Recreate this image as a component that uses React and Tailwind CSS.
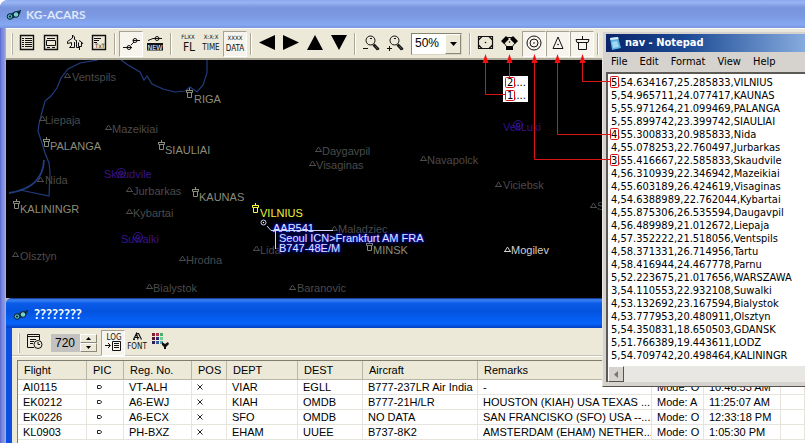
import React from "react";

const SANS = "font-['Liberation_Sans',Arial,sans-serif]";
const TAHOMA = "font-['DejaVu_Sans_Condensed','DejaVu_Sans',sans-serif]";

const TRIANGLE = "triangle";
const TOWER = "tower";
const VOR = "vor";

const DIM = "#4b4b4b";
const CITY = "#8c8c7a";
const PURPLE = "#37128a";

// x and y are the start of the name and its baseline; sx and sy the symbol's centre.
const places = [
  { name: "Ventspils", x: 72, y: 21, sx: 67, sy: 15, kind: TRIANGLE, color: DIM },
  { name: "RIGA", x: 194, y: 43, sx: 189, sy: 33, kind: TOWER, color: CITY },
  { name: "Liepaja", x: 45, y: 64, sx: 42, sy: 58, kind: TRIANGLE, color: DIM },
  { name: "Mazeikiai", x: 112, y: 73, sx: 108, sy: 67, kind: TRIANGLE, color: DIM },
  { name: "PALANGA", x: 50, y: 90, sx: 46, sy: 82, kind: TOWER, color: CITY },
  { name: "SIAULIAI", x: 165, y: 94, sx: 161, sy: 85, kind: TOWER, color: CITY },
  { name: "Skaudvile", x: 104, y: 118, sx: 121, sy: 113, kind: VOR, color: PURPLE },
  { name: "Nida", x: 45, y: 124, sx: 40, sy: 119, kind: TRIANGLE, color: DIM },
  { name: "Jurbarkas", x: 133, y: 135, sx: 129, sy: 129, kind: TRIANGLE, color: DIM },
  { name: "KAUNAS", x: 199, y: 141, sx: 195, sy: 132, kind: TOWER, color: CITY },
  { name: "Kybartai", x: 133, y: 157, sx: 129, sy: 151, kind: TRIANGLE, color: DIM },
  { name: "KALININGR", x: 20, y: 153, sx: 16, sy: 144, kind: TOWER, color: CITY },
  { name: "Suwalki", x: 121, y: 183, sx: 138, sy: 177, kind: VOR, color: PURPLE },
  { name: "Olsztyn", x: 20, y: 200, sx: 15, sy: 194, kind: TRIANGLE, color: DIM },
  { name: "Hrodna", x: 186, y: 204, sx: 182, sy: 198, kind: TRIANGLE, color: DIM },
  { name: "Bialystok", x: 153, y: 232, sx: 149, sy: 226, kind: TRIANGLE, color: DIM },
  { name: "Daygavpil", x: 322, y: 95, sx: 318, sy: 89, kind: TRIANGLE, color: DIM },
  { name: "Visaginas", x: 316, y: 109, sx: 312, sy: 103, kind: TRIANGLE, color: DIM },
  { name: "Navapolck", x: 427, y: 104, sx: 423, sy: 98, kind: TRIANGLE, color: DIM },
  { name: "Viciebsk", x: 503, y: 129, sx: 498, sy: 124, kind: TRIANGLE, color: DIM },
  { name: "S", x: 597, y: 150, sx: 593, sy: 145, kind: TRIANGLE, color: DIM },
  { name: "VeliLuki", x: 503, y: 71, sx: 518, sy: 65, kind: VOR, color: PURPLE },
  { name: "VILNIUS", x: 260, y: 157, sx: 255, sy: 148, kind: TOWER, color: "#f4f43c" },
  { name: "Maladziec", x: 338, y: 173, sx: 334, sy: 168, kind: TRIANGLE, color: DIM },
  { name: "Lida", x: 260, y: 194, sx: 256, sy: 188, kind: TRIANGLE, color: DIM },
  { name: "MINSK", x: 373, y: 194, sx: 369, sy: 186, kind: TOWER, color: CITY },
  { name: "Mogilev", x: 511, y: 194, sx: 507, sy: 189, kind: TRIANGLE, color: "#cfcfcf" },
  { name: "Baranovic", x: 297, y: 232, sx: 292, sy: 227, kind: TRIANGLE, color: DIM },
];

function Symbol({ kind, x, y, color }) {
  if (kind === TRIANGLE)
    return <path d={`M${x - 3} ${y + 2.5}H${x + 4}M${x - 2} ${y + 2}L${x + 0.5} ${y - 2}L${x + 3} ${y + 2}`} fill="none" stroke={color} />;
  if (kind === TOWER)
    return (
      <path
        d={`M${x - 3} ${y - 2.5}H${x + 4}M${x - 2.5} ${y - 2}V${y - 0.5}H${x + 3.5}V${y - 2}M${x - 1.5} ${y}V${y + 4.5}H${x + 2.5}V${y}M${x + 0.5} ${y - 5}V${y - 2}`}
        fill="none"
        stroke={color}
      />
    );
  return (
    <g fill="none" stroke={color}>
      <circle cx={x} cy={y} r="4.5" />
      <circle cx={x} cy={y} r="2" />
    </g>
  );
}

function RadarMap() {
  return (
    <section aria-label="Map" className="relative h-[238px] shrink-0 overflow-hidden bg-black">
      <svg className="absolute -left-[6px] top-0" width="605" height="238" aria-hidden="true">
        <g fill="none" stroke="#223c80" strokeWidth="1.2">
          <path d="M98 0L80 3L68 9L61 18L57 28L51 36L45 41L42 52L39 64L38 71L42 83L45 93L49 103L50 112L49 136L20 130" />
          <path d="M121 0L128 5L140 12L144 20L147 16L152 24L163 29L175 32L185 31L190 27L197 32L203 25L207 13V0" />
          <path d="M44 100Q43 128 9 133" strokeWidth="1.8" />
        </g>
        {places.map((p) => (
          <Symbol key={p.name} kind={p.kind} x={p.sx} y={p.sy} color={p.color} />
        ))}
      </svg>
      <div className="absolute -left-[6px] top-0">
        {places.map((p) => (
          <span
            key={p.name}
            className={`absolute text-[11px] leading-3 ${SANS}`}
            style={{ left: p.x, top: p.y - 10, color: p.color }}
          >
            {p.name}
          </span>
        ))}
      </div>
      <div
        className={`absolute top-[163px] left-[267px] text-[11px] leading-[10px] whitespace-nowrap text-[#dfe4ff] [text-shadow:0_0_2px_#1c1ce8,0_0_3px_#1c1ce8,0_0_5px_#1010c0] ${SANS}`}
      >
        <div>AAR541</div>
        <div className="pl-[6px]">Seoul ICN&gt;Frankfurt AM FRA</div>
        <div className="pl-[6px]">B747-48E/M</div>
      </div>
      <svg className="absolute -left-[6px] top-0" width="420" height="238" aria-hidden="true">
        <g fill="none" stroke="#cfd6ff">
          <circle cx="263.5" cy="162.5" r="2.5" />
          <path d="M267 166L271 170.500H333M275.500 171V189" />
        </g>
        <circle cx="263.500" cy="162.500" r=".7" fill="#fff" />
      </svg>
    </section>
  );
}

function ToolButton({ label, pressed, children }) {
  return (
    <button
      type="button"
      aria-label={label}
      aria-pressed={pressed}
      className={
        pressed
          ? "flex h-[26px] w-6 items-start justify-center border border-t-[#a5a294] border-l-[#a5a294] border-r-white border-b-white bg-[#f6f4ec]"
          : "flex h-[26px] w-6 items-start justify-center border border-transparent"
      }
    >
      <svg width="22" height="24" viewBox="1 1 22 24" fill="none" stroke="#111" aria-hidden="true">
        {children}
      </svg>
    </button>
  );
}

function Divider() {
  return <div className="mx-[3px] h-[22px] w-[2px] border-l border-[#aca899] bg-white" />;
}

function IconText({ x, y, size, fill = "#111", children }) {
  return (
    <text
      x={x}
      y={y}
      fontSize={size}
      fill={fill}
      stroke="none"
      textAnchor="middle"
      fontFamily="DejaVu Sans Condensed, Liberation Sans, sans-serif"
    >
      {children}
    </text>
  );
}

function Magnifier({ plus }) {
  return (
    <>
      <circle cx="11.500" cy="9.500" r="4.500" />
      <path d="M15 13L20 18M14 14L18 18.500L20 18" strokeWidth="1.4" />
      <path d="M11 7.500H13" />
      <path d={plus ? "M4 17.500H9M6.500 15V20" : "M4 17.500H9"} />
    </>
  );
}

function MainToolbar() {
  return (
    <div className="flex h-[30px] shrink-0 items-center border-t border-[#fdfdf8] bg-[#ece9d8] pl-[5px] pt-px">
      <div className="mr-[2px] h-[22px] w-[2px] border-l border-white bg-[#b5b2a2]" />
      <ToolButton label="List">
        <path d="M5.500 4.500H18.500V18.500H5.500Z" strokeWidth="1.4" />
        <path d="M7 7.500H9M10 7.500H17M7 9.500H9M10 9.500H17M7 11.500H9M10 11.500H17M7 13.500H9M10 13.500H17M7 15.500H9M10 15.500H17" />
      </ToolButton>
      <ToolButton label="Form">
        <path d="M5.500 4.500H18.500V18.500H5.500Z" strokeWidth="1.4" />
        <path d="M8 7.500H16M7.500 9.500H16.500V14.500H7.500ZM8 16.500H11M13 16.500H16" />
      </ToolButton>
      <ToolButton label="Aircraft">
        <path d="M9.500 4V7L4.500 10.500V12.500L8.500 11.500V14.500L6.500 16.500H11.500M9.500 4L11.500 6V8.500L14 10M11.500 11V16.500" />
        <path d="M13.500 9.500V16.500H16M16 9.500L18.500 11V15.500H15.500V11.500M16.500 16V19M18.500 11L20 13" />
      </ToolButton>
      <ToolButton label="Text log">
        <path d="M5.500 4.500H18.500V18.500H5.500Z" strokeWidth="1.4" />
        <path d="M7 7.500H14M7 9.500H12M7 11.500H10" />
        <IconText x="13" y="17" size="6">TxT</IconText>
      </ToolButton>
      <Divider />
      <ToolButton label="Route" pressed>
        <path d="M4 16.500H13M12 14L15 11M14 9.500H21" />
        <circle cx="10" cy="16.500" r="2" />
        <circle cx="16" cy="9.500" r="2" />
      </ToolButton>
      <ToolButton label="New route">
        <path d="M5 9.500L10 7.500H19" />
        <circle cx="14" cy="7.500" r="2" />
        <path d="M4 12H20V19.500H4Z" fill="#111" stroke="none" />
        <IconText x="12" y="18.500" size="7" fill="#fff">NEW</IconText>
      </ToolButton>
      <Divider />
      <ToolButton label="Flight level">
        <IconText x="13" y="8" size="6">FLXX</IconText>
        <IconText x="14" y="20" size="12">FL</IconText>
      </ToolButton>
      <ToolButton label="Time">
        <IconText x="12" y="8" size="6">X:X:X</IconText>
        <IconText x="12" y="19" size="8">TIME</IconText>
      </ToolButton>
      <ToolButton label="Data" pressed>
        <IconText x="12" y="9" size="6">XXXX</IconText>
        <IconText x="12" y="20" size="8">DATA</IconText>
      </ToolButton>
      <Divider />
      <ToolButton label="Left">
        <path d="M4 11.500L20 4V19Z" fill="#000" stroke="none" />
      </ToolButton>
      <ToolButton label="Right">
        <path d="M20 11.500L4 4V19Z" fill="#000" stroke="none" />
      </ToolButton>
      <ToolButton label="Up">
        <path d="M12 4L20 19H4Z" fill="#000" stroke="none" />
      </ToolButton>
      <ToolButton label="Down">
        <path d="M12 19L20 4H4Z" fill="#000" stroke="none" />
      </ToolButton>
      <Divider />
      <ToolButton label="Zoom out">
        <Magnifier />
      </ToolButton>
      <ToolButton label="Zoom in">
        <Magnifier plus />
      </ToolButton>
      <div className="relative mr-1 ml-1 h-[22px] w-[51px] border border-t-[#86836f] border-l-[#86836f] border-r-[#d8d5c5] border-b-[#d8d5c5] bg-white">
        <select
          aria-label="Zoom level"
          className={`block h-5 w-full appearance-none bg-transparent pb-[2px] pl-[3px] text-xs leading-[18px] text-black ${SANS}`}
          defaultValue="50"
        >
          <option value="50">50%</option>
        </select>
        <div className="pointer-events-none absolute top-0 right-0 flex h-full w-4 items-center justify-center border border-t-white border-l-white border-r-[#8c8978] border-b-[#8c8978] bg-[#ece9d8]">
          <svg width="7" height="4" aria-hidden="true">
            <path d="M0 0H7L3.500 4Z" />
          </svg>
        </div>
      </div>
      <Divider />
      <ToolButton label="Show all">
        <path d="M4.500 5.500H18.500V17.500H4.500ZM4.500 9L8 5.500M15 5.500L18.500 9M18.500 14L15 17.500M8 17.500L4.500 14" strokeWidth="1.2" />
        <circle cx="11.500" cy="11.500" r=".8" fill="#111" stroke="none" />
      </ToolButton>
      <ToolButton label="Waypoints">
        <path d="M3 10L8 5L11 8L6 13ZM20 10L15 5L12 8L17 13ZM8 15H15V19H8Z" fill="#000" stroke="none" />
        <path d="M9 6.500H14M6 12L9 16M17 12L14 16" />
        <circle cx="11.500" cy="11" r=".8" fill="#111" stroke="none" />
      </ToolButton>
      <ToolButton label="Beacons" pressed>
        <circle cx="12" cy="12" r="7" />
        <circle cx="12" cy="12" r="4" />
        <circle cx="12" cy="12" r=".8" fill="#111" stroke="none" />
      </ToolButton>
      <ToolButton label="Towns" pressed>
        <path d="M12 6L17 17.500H7Z" />
        <circle cx="12" cy="13.500" r=".8" fill="#111" stroke="none" />
      </ToolButton>
      <ToolButton label="Airports" pressed>
        <path d="M6 8.500H19L18 11.500H7ZM8.500 12V18.500H16.500V12M12.500 5V8" />
      </ToolButton>
      <Divider />
    </div>
  );
}

function AppIcon() {
  return (
    <svg width="16" height="12" viewBox="0 0 16 12" fill="none" aria-hidden="true">
      <path d="M2 6L8 3L15 1L14 5L8 9L3 10Z" fill="#123a52" />
      <circle cx="4" cy="7.500" r="2.800" stroke="#06203a" fill="#4fb3b8" />
      <circle cx="10" cy="5.500" r="2.800" stroke="#06203a" fill="#7ad0c8" />
      <circle cx="4" cy="7.500" r="1" fill="#06203a" />
      <path d="M12 4L15 1" stroke="#06203a" />
    </svg>
  );
}

const rows = [
  ["AI0115", "VT-ALH", "VIAR", "EGLL", "B777-237LR Air India", "-", "Mode: O", "10:46:53 AM"],
  ["EK0212", "A6-EWJ", "KIAH", "OMDB", "B777-21H/LR", "HOUSTON (KIAH) USA TEXAS ...", "Mode: A", "11:25:07 AM"],
  ["EK0226", "A6-ECX", "SFO", "OMDB", "NO DATA", "SAN FRANCISKO (SFO) USA --...", "Mode: O", "12:33:18 PM"],
  ["KL0903", "PH-BXZ", "EHAM", "UUEE", "B737-8K2", "AMSTERDAM (EHAM) NETHER...", "Mode: O", "1:05:30 PM"],
];

const headings = ["Flight", "PIC", "Reg. No.", "POS", "DEPT", "DEST", "Aircraft", "Remarks", "", "", ""];

function Cell({ children }) {
  return (
    <td className="h-[15px] overflow-hidden border-r border-b border-[#e6e4dc] p-0 pl-[5px] leading-[14px] whitespace-nowrap">
      {children}
    </td>
  );
}

function FlightTable() {
  return (
    <table className={`w-full table-fixed border-separate border-spacing-0 text-[11px] text-black ${SANS}`}>
      <colgroup>
        <col className="w-[69px]" />
        <col className="w-[37px]" />
        <col className="w-[68px]" />
        <col className="w-[35px]" />
        <col className="w-[71px]" />
        <col className="w-[65px]" />
        <col className="w-[115px]" />
        <col className="w-[174px]" />
        <col className="w-[52px]" />
        <col className="w-[77px]" />
        <col />
      </colgroup>
      <thead>
        <tr>
          {headings.map((h, i) => (
            <th
              key={i}
              scope="col"
              className="h-[19px] border-r border-b border-[#b9b6a6] bg-[#ece9d8] p-0 pl-[6px] text-left leading-4 font-normal"
            >
              {h}
            </th>
          ))}
        </tr>
      </thead>
      <tbody>
        {rows.map(([flight, reg, dept, dest, aircraft, remarks, mode, time]) => (
          <tr key={flight}>
            <Cell>{flight}</Cell>
            <Cell>
              <svg className="ml-1" width="7" height="6" fill="none" stroke="#222" aria-label="picture" role="img">
                <path d="M1.500 1.500H4L5.500 2.500V3.500L4 4.500H1.500Z" />
              </svg>
            </Cell>
            <Cell>{reg}</Cell>
            <Cell>
              <svg width="6" height="6" fill="none" stroke="#222" aria-label="no position" role="img">
                <path d="M.5 .5L5.500 5.500M5.500 .5L.5 5.500" />
              </svg>
            </Cell>
            <Cell>{dept}</Cell>
            <Cell>{dest}</Cell>
            <Cell>{aircraft}</Cell>
            <Cell>{remarks}</Cell>
            <Cell>{mode}</Cell>
            <Cell>{time}</Cell>
            <Cell />
          </tr>
        ))}
      </tbody>
    </table>
  );
}

function LogToolbar() {
  return (
    <div className="flex h-7 shrink-0 items-center border-b border-[#c5c2b2] pt-[2px] pl-[6px]">
      <div className="mr-1 h-[20px] w-[2px] border-l border-white bg-[#b5b2a2]" />
      <ToolButton label="History">
        <path d="M3.500 4.500H15.500V10M3.500 4.500V17.500H10M4 6.500H15M6 9.500H12M6 11.500H10M6 13.500H9" />
        <circle cx="14" cy="14.500" r="4" />
        <path d="M14 12V14.500H16" />
      </ToolButton>
      <input
        type="text"
        aria-label="Minutes"
        defaultValue="720"
        className={`ml-[3px] h-[18px] w-[29px] bg-[#c3c2c0] pl-[4px] text-xs text-black ${SANS}`}
      />
      <div className="flex h-[18px] w-[17px] flex-col">
        {["Increase", "Decrease"].map((label) => (
          <button
            key={label}
            type="button"
            aria-label={label}
            className="flex h-[9px] items-center justify-center border border-t-white border-l-white border-r-[#8c8978] border-b-[#8c8978] bg-[#ece9d8]"
          >
            <svg width="5" height="3" aria-hidden="true">
              <path d={label === "Increase" ? "M0 3L2.500 0L5 3Z" : "M0 0L2.500 3L5 0Z"} />
            </svg>
          </button>
        ))}
      </div>
      <div className="w-1" />
      <ToolButton label="Log" pressed>
        <IconText x="13" y="10" size="8">LOG</IconText>
        <path d="M4 15.500H9M7 13L9.500 15.500L7 18M11.500 11.500H19.500V20.500H11.500ZM13 13.500H18M13 15.500H18M13 17.500H18" />
      </ToolButton>
      <ToolButton label="Font">
        <path d="M8 9.500H10M8.500 9.500L11.500 3.500L13 9.500M10 7.500H14M13.500 3.500L16.500 9.500M11 3.500H14" strokeWidth="1.200" />
        <IconText x="12" y="19" size="8">FONT</IconText>
      </ToolButton>
      <ToolButton label="Colours">
        <g stroke="none">
          <path d="M3 3H6V6H3Z" fill="#7a2035" />
          <path d="M7 3H10V6H7Z" fill="#b03050" />
          <path d="M11 3H14V6H11Z" fill="#45b070" />
          <path d="M3 7H6V10H3Z" fill="#5a1030" />
          <path d="M7 7H10V10H7Z" fill="#302a70" />
          <path d="M11 7H14V10H11Z" fill="#70d090" />
          <path d="M3 11H6V14H3Z" fill="#28205a" />
          <path d="M7 11H10V14H7Z" fill="#38589a" />
          <path d="M11 11H14V14H11Z" fill="#58a8b8" />
          <path d="M13 12L16 14L19 12L20 14L17 17V19H15V17L13 15Z" fill="#111" />
        </g>
      </ToolButton>
    </div>
  );
}

function LogWindow() {
  return (
    <section aria-label="Log" className="flex flex-1 flex-col overflow-hidden rounded-tl-md bg-[#0a4fe0] pl-[6px]">
      <header className="-ml-[6px] flex h-[30px] shrink-0 items-center gap-1 bg-[linear-gradient(#0a2a80_0%,#3d86f5_6%,#0a5be8_18%,#0453df_45%,#0664fb_85%,#0340c0_100%)] pt-[3px] pl-[7px]">
        <AppIcon />
        <h2 className="pl-px font-['Lato','Open_Sans',sans-serif] text-[13px] font-bold text-white">????????</h2>
      </header>
      <div className="flex flex-1 flex-col bg-[#ece9d8]">
        <LogToolbar />
        <div className="h-[4px] shrink-0 border-t border-white" />
        <div className="ml-[5px] flex-1 border-t border-l border-[#7f7d70] bg-white">
          <FlightTable />
        </div>
      </div>
    </section>
  );
}

const notes = [
  "5,54.634167,25.285833,VILNIUS",
  "5,54.965711,24.077417,KAUNAS",
  "5,55.971264,21.099469,PALANGA",
  "5,55.899742,23.399742,SIAULIAI",
  "4,55.300833,20.985833,Nida",
  "4,55.078253,22.760497,Jurbarkas",
  "3,55.416667,22.585833,Skaudvile",
  "4,56.310939,22.346942,Mazeikiai",
  "4,55.603189,26.424619,Visaginas",
  "4,54.6388989,22.762044,Kybartai",
  "4,55.875306,26.535594,Daugavpil",
  "4,56.489989,21.012672,Liepaja",
  "4,57.352222,21.518056,Ventspils",
  "4,58.371331,26.714956,Tartu",
  "4,58.416944,24.467778,Parnu",
  "5,52.223675,21.017656,WARSZAWA",
  "3,54.110553,22.932108,Suwalki",
  "4,53.132692,23.167594,Bialystok",
  "4,53.777953,20.480911,Olsztyn",
  "5,54.350831,18.650503,GDANSK",
  "5,51.766389,19.443611,LODZ",
  "5,54.709742,20.498464,KALININGR",
].join("\n");

function Notepad() {
  return (
    <section
      aria-label="Notepad"
      className="absolute top-[31px] right-0 left-[602px] overflow-hidden border-t border-b border-l border-t-[#e8e6e0] border-l-[#e8e6e0] border-b-[#55534c] bg-[#d6d3ce] pt-[2px] pb-[4px] pl-[3px] text-black"
    >
      <header className="flex h-[18px] items-center gap-1 bg-[linear-gradient(90deg,#0a246a,#1c4a94_40%,#86abde)] pl-[3px]">
        <svg width="12" height="15" aria-hidden="true">
          <path d="M1 2L9 1L12 12L3 14Z" fill="#5ab0e0" />
          <path d="M1 2L9 1L9.500 3L1.500 4Z" fill="#d8eef8" />
          <path d="M3 6L8 5L10 11L4 12Z" fill="#a0d8f0" />
        </svg>
        <h2 className={`text-[11px] font-bold text-white ${TAHOMA}`}>nav - Notepad</h2>
      </header>
      <nav className={`flex h-[20px] items-center gap-3 pl-[5px] text-[11px] ${TAHOMA}`}>
        {["File", "Edit", "Format", "View", "Help"].map((item) => (
          <button key={item} type="button">
            {item}
          </button>
        ))}
      </nav>
      <div className="border-t-2 border-l-2 border-[#5c5a54] bg-white">
        <textarea
          aria-label="nav"
          readOnly
          wrap="off"
          rows={22}
          defaultValue={notes}
          className={`block w-full resize-none overflow-hidden pt-[2px] pb-[4px] pl-[3px] text-[11px] leading-[13px] outline-none ${TAHOMA}`}
        />
        <div className="h-4 bg-[#e9e7e3]">
          <button
            type="button"
            aria-label="Scroll left"
            className="flex h-4 w-4 items-center justify-center border border-t-white border-l-white border-r-[#55534c] border-b-[#55534c] bg-[#d6d3ce]"
          >
            <svg width="4" height="7" aria-hidden="true">
              <path d="M4 0V7L0 3.500Z" fill="#77756e" />
            </svg>
          </button>
        </div>
      </div>
    </section>
  );
}

function Callouts() {
  return (
    <>
      <div
        className={`absolute top-[76px] left-[503px] w-[25px] bg-white pl-[4px] text-[11px] leading-[13px] text-black ${TAHOMA}`}
      >
        <div>2,...</div>
        <div>1,...</div>
      </div>
      <svg className="pointer-events-none absolute top-0 left-0" width="640" height="180" fill="none" stroke="#dc1414" aria-hidden="true">
        <path d="M485.500 60V94.500H505M509.500 60V77M534.500 60V159.500H610M557.500 60V134.500H610M582.500 60V81.500H610" />
        <g>
          <rect x="505.500" y="77.500" width="9" height="10" rx="1" />
          <rect x="505.500" y="90.500" width="9" height="10" rx="1" />
          <rect x="610.500" y="76.500" width="8" height="11" rx="1" />
          <rect x="610.500" y="128.500" width="8" height="11" rx="1" />
          <rect x="610.500" y="154.500" width="8" height="11" rx="1" />
        </g>
        <path
          d="M485.500 54L488.500 63H482.500ZM509.500 54L512.500 63H506.500ZM534.500 54L537.500 63H531.500ZM557.500 54L560.500 63H554.500ZM582.500 54L585.500 63H579.500Z"
          fill="#f01010"
          stroke="none"
        />
      </svg>
    </>
  );
}

export default function App() {
  return (
    <main className="relative flex h-screen flex-col overflow-hidden rounded-tl-lg bg-[linear-gradient(90deg,#5566cc_0,#7b8ae2_2px,#8090e0_4px,#b5b9d0_6px)] pl-[6px]">
      <header className="-ml-[6px] flex h-7 shrink-0 items-center gap-1 bg-[linear-gradient(#8ba9ee_0%,#98b4f4_8%,#7894dc_28%,#7b98e2_55%,#86a8f2_88%,#7a96de_100%)] pt-[2px] pl-[6px]">
        <AppIcon />
        <h1 className="font-['Lato','Open_Sans',sans-serif] text-xs font-bold text-[#dfe8fb]">KG-ACARS</h1>
      </header>
      <MainToolbar />
      <div className="h-[2px] shrink-0 bg-[#a9a698]" />
      <RadarMap />
      <LogWindow />
      <Notepad />
      <Callouts />
    </main>
  );
}
